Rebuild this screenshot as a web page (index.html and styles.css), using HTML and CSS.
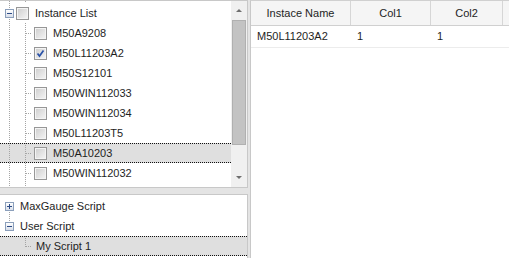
FILE: index.html
```html
<!doctype html>
<html lang="en">
<head>
    <meta charset="utf-8">
    <title>Script Instances</title>
    <link rel="stylesheet" href="styles.css">
</head>
<body>

<div class="layout">
    <div class="side">
        <div class="panel panel-instances">
            <ul class="tree">
                <li class="node">
                    <span class="ind exp exp-mid"><span class="expander minus"></span></span>
                    <span class="chk"></span>
                    <span class="label">Instance List</span>
                </li>
                <li class="node"><span class="ind line"></span><span class="ind tee"></span><span class="chk"></span><span class="label">M50A9208</span></li>
                <li class="node"><span class="ind line"></span><span class="ind tee"></span><span class="chk checked"><svg width="11" height="11" viewBox="0 0 11 11"><path d="M2.5 5.5 L4.5 8 L8.5 2.5" fill="none" stroke="#2a52a8" stroke-width="1.7"/></svg></span><span class="label">M50L11203A2</span></li>
                <li class="node"><span class="ind line"></span><span class="ind tee"></span><span class="chk"></span><span class="label">M50S12101</span></li>
                <li class="node"><span class="ind line"></span><span class="ind tee"></span><span class="chk"></span><span class="label">M50WIN112033</span></li>
                <li class="node"><span class="ind line"></span><span class="ind tee"></span><span class="chk"></span><span class="label">M50WIN112034</span></li>
                <li class="node"><span class="ind line"></span><span class="ind tee"></span><span class="chk"></span><span class="label">M50L11203T5</span></li>
                <li class="node selected"><span class="ind line"></span><span class="ind tee"></span><span class="chk"></span><span class="label">M50A10203</span></li>
                <li class="node"><span class="ind line"></span><span class="ind tee"></span><span class="chk"></span><span class="label">M50WIN112032</span></li>
            </ul>
            <div class="scrollbar">
                <span class="arrow arrow-up"></span>
                <span class="thumb"></span>
                <span class="arrow arrow-down"></span>
            </div>
        </div>

        <div class="panel panel-scripts">
            <ul class="tree">
                <li class="node">
                    <span class="ind exp exp-first"><span class="expander plus"></span></span>
                    <span class="label label-root">MaxGauge Script</span>
                </li>
                <li class="node">
                    <span class="ind exp exp-last"><span class="expander minus"></span></span>
                    <span class="label label-root">User Script</span>
                </li>
                <li class="node selected"><span class="ind"></span><span class="ind end"></span><span class="label label-root">My Script 1</span></li>
            </ul>
        </div>
    </div>

    <div class="grid">
        <div class="grid-row grid-head">
            <div class="cell">Instace Name</div>
            <div class="cell">Col1</div>
            <div class="cell">Col2</div>
            <div class="cell cell-fill"></div>
        </div>
        <div class="grid-row grid-data">
            <div class="cell">M50L11203A2</div>
            <div class="cell">1</div>
            <div class="cell">1</div>
            <div class="cell cell-fill"></div>
        </div>
    </div>
</div>

</body>
</html>
```

FILE: styles.css
```css
html, body {
    margin: 0;
    padding: 0;
}

body {
    font-family: "Liberation Sans", Arial, sans-serif;
    font-size: 11px;
    color: #1e1e1e;
    background: #e4e4e4;
}

.layout {
    display: flex;
    gap: 2px;
    height: 258px;
}

.side {
    width: 248px;
    flex: none;
    display: flex;
    flex-direction: column;
    gap: 6px;
}

.panel {
    display: flex;
    background: #fff;
    border: 1px solid #c8c8c8;
    border-left: 0;
    overflow: hidden;
}
    .panel-instances {
        height: 188px;
        box-sizing: border-box;
    }
    .panel-scripts {
        flex: 1;
        border-bottom: 0;
    }

/* tree */
.tree {
    --dot-v: repeating-linear-gradient(to bottom, #a5a5a5 0 1px, transparent 1px 2px);
    --dot-h: repeating-linear-gradient(to right, #a5a5a5 0 1px, transparent 1px 2px);
    list-style: none;
    margin: 0;
    padding: 2px 0 0;
    flex: 1;
    overflow: hidden;
    background: var(--dot-v) 9px 0 / 1px 100% no-repeat,
                var(--dot-v) 25px 0 / 1px 100% no-repeat;
}
    .panel-scripts .tree {
        padding-top: 1px;
        background: none;
    }

.node {
    display: flex;
    align-items: center;
    height: 20px;
    box-sizing: border-box;
    border-top: 1px dotted transparent;
    border-bottom: 1px dotted transparent;
    background: #fff;
    white-space: nowrap;
}
    .node.selected {
        background: #dfdfdf;
        border-color: #111;
    }

.ind {
    flex: none;
    width: 16px;
    height: 20px;
}
    .line {
        background: var(--dot-v) 9px 0 / 1px 100% no-repeat;
    }
    .tee {
        background: var(--dot-h) 10px 10px / 7px 1px no-repeat,
                    var(--dot-v) 9px 0 / 1px 100% no-repeat;
    }
    .end {
        background: var(--dot-h) 10px 10px / 7px 1px no-repeat,
                    var(--dot-v) 9px 0 / 1px 11px no-repeat;
    }
    .exp {
        display: flex;
        align-items: center;
    }
        .exp-mid {
            background: var(--dot-v) 9px 0 / 1px 100% no-repeat;
        }
        .exp-first {
            background: var(--dot-v) 9px 10px / 1px 10px no-repeat;
        }
        .exp-last {
            background: var(--dot-v) 9px 0 / 1px 10px no-repeat;
        }

.expander {
    width: 9px;
    height: 9px;
    margin-left: 5px;
    box-sizing: border-box;
    border: 1px solid #8b9fbb;
}
    .expander.minus {
        background: linear-gradient(#2c4b86, #2c4b86) 1px 3px / 5px 1px no-repeat,
                    linear-gradient(#fff, #d8dee9);
    }
    .expander.plus {
        background: linear-gradient(#2c4b86, #2c4b86) 1px 3px / 5px 1px no-repeat,
                    linear-gradient(#2c4b86, #2c4b86) 3px 1px / 1px 5px no-repeat,
                    linear-gradient(#fff, #d8dee9);
    }

.chk {
    flex: none;
    width: 13px;
    height: 13px;
    box-sizing: border-box;
    border: 1px solid #979797;
    box-shadow: inset 0 0 0 1px #f4f4f4;
    background: linear-gradient(135deg, #cdcdcd, #f6f6f6);
}
    .chk svg {
        display: block;
    }
    .tee + .chk {
        margin-left: 2px;
    }

.label {
    margin-left: 6px;
}
    .label-root {
        margin-left: 4px;
    }

/* scrollbar */
.scrollbar {
    flex: none;
    width: 16px;
    display: flex;
    flex-direction: column;
    align-items: center;
    background: #f0f0f0;
}
    .arrow {
        width: 16px;
        height: 19px;
        display: flex;
        align-items: center;
        justify-content: center;
    }
        .arrow::before {
            content: "";
            border-left: 3px solid transparent;
            border-right: 3px solid transparent;
        }
        .arrow-up::before {
            border-bottom: 3px solid #6e6e6e;
        }
        .arrow-down {
            margin-top: auto;
        }
        .arrow-down::before {
            border-top: 3px solid #6e6e6e;
        }
    .thumb {
        width: 14px;
        height: 125px;
        box-sizing: border-box;
        background: #c3c3c3;
        border: 1px solid #b0b0b0;
    }

/* grid */
.grid {
    flex: 1;
    background: #fff;
    border-left: 1px solid #c8c8c8;
    border-top: 1px solid #d0d0d0;
}

.grid-row {
    display: grid;
    grid-template-columns: 100px 80px 72px 1fr;
}
    .grid-head {
        height: 25px;
        box-sizing: border-box;
        background: #f5f5f5;
        border-bottom: 1px solid #d0d0d0;
    }
        .grid-head .cell {
            text-align: center;
            line-height: 24px;
            border-right: 1px solid #d6d6d6;
        }
        .grid-head .cell-fill {
            border-right: 0;
        }
    .grid-data {
        height: 22px;
        box-sizing: border-box;
        border-bottom: 1px solid #ececec;
    }
        .grid-data .cell {
            padding: 0 6px;
            line-height: 21px;
        }
```
